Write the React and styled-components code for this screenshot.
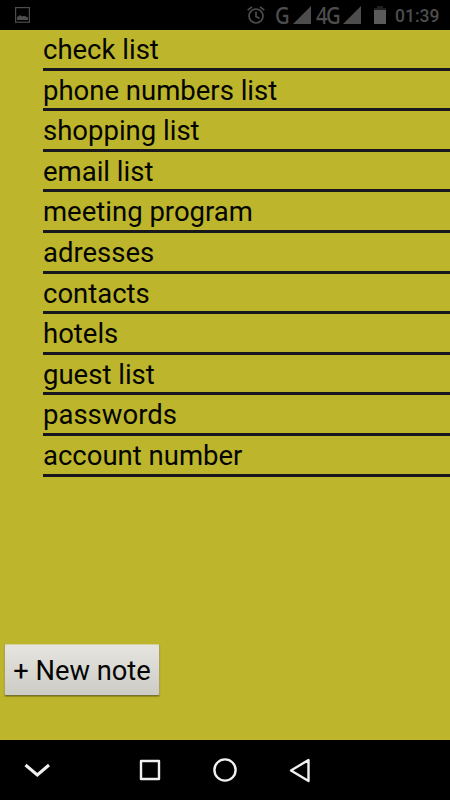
import React from "react";
import styled, { createGlobalStyle } from "styled-components";

const GlobalStyle = createGlobalStyle`
  * { box-sizing: border-box; }
  body { margin: 0; background: #000; font-family: Roboto, sans-serif; }
`;

const Screen = styled.div`
  width: 450px;
  height: 800px;
  display: flex;
  flex-direction: column;
  overflow: hidden;
  background: #000;
`;

const StatusBar = styled.header`
  flex: 0 0 30px;
  height: 30px;
  display: flex;
  align-items: center;
  padding: 0 10px 0 15px;
  color: #4d4d4d;
`;

const StatusIcon = styled.svg`
  display: block;
  flex: none;
  margin-left: ${(p) => p.$gap || 0}px;
`;

const Network = styled.span`
  flex: none;
  width: ${(p) => p.$width}px;
  margin-left: ${(p) => p.$gap}px;
  font-family: "Noto Sans", sans-serif;
  font-size: 23px;
  font-weight: 500;
  line-height: 28px;
  padding-bottom: 1px;
  letter-spacing: ${(p) => p.$tracking || 0}px;
  white-space: nowrap;
  transform: scaleX(0.88);
  transform-origin: left;
`;

const Clock = styled.time`
  flex: none;
  width: 45px;
  margin-left: 9px;
  padding-top: 2px;
  font-size: 17.5px;
  font-weight: 500;
  line-height: 29px;
`;

const Spacer = styled.div`
  flex: 1;
`;

const Content = styled.main`
  flex: 0 0 710px;
  display: flex;
  flex-direction: column;
  justify-content: space-between;
  background: #bdb52b;
`;

const NoteList = styled.ul`
  list-style: none;
  margin: 0;
  padding: 0 0 0 43px;
`;

const NoteRow = styled.li`
  height: 40.62px;
  border-bottom: 3px solid #17171d;
  font-size: 27.5px;
  line-height: 40px;
  color: #050500;
  white-space: nowrap;
`;

const NewNote = styled.button`
  width: 156px;
  height: 52px;
  margin: 0 0 44px 4px;
  padding: 1px 0 0;
  border: 1px solid #aaa451;
  border-top-color: #d2cf9c;
  border-bottom-color: #777433;
  border-radius: 2px;
  background: linear-gradient(#e5e4df, #cccbc5);
  box-shadow: 0 1px 1px rgba(70, 65, 0, 0.35);
  font: 27.3px/48px Roboto, sans-serif;
  color: #050505;
  white-space: nowrap;
`;

const NavBar = styled.nav`
  flex: 0 0 60px;
  display: grid;
  grid-template-columns: 112px 76px 74px 76px;
  align-items: center;
`;

const NavIcon = styled.svg`
  display: block;
  width: 28px;
  height: 28px;
  margin-left: ${(p) => p.$inset}px;
  fill: none;
  stroke: #f0f0f0;
  stroke-width: 2.4;
  stroke-linejoin: round;
`;

const notes = [
  "check list",
  "phone numbers list",
  "shopping list",
  "email list",
  "meeting program",
  "adresses",
  "contacts",
  "hotels",
  "guest list",
  "passwords",
  "account number",
];

function Signal() {
  return (
    <StatusIcon $gap={2} width="18" height="18" viewBox="0 0 18 18">
      <path d="M18 0v18H0z" fill="currentColor" />
    </StatusIcon>
  );
}

export default function App() {
  return (
    <Screen>
      <GlobalStyle />
      <StatusBar>
        <StatusIcon width="15" height="16" viewBox="0 0 15 16">
          <rect x=".6" y=".6" width="13.8" height="14.6" fill="none" stroke="currentColor" strokeWidth="1.2" />
          <path d="M2 13V10l2-1 1-1 2 1.5 2-.8 2 .8 2 1V13z" fill="currentColor" />
        </StatusIcon>
        <Spacer />
        <StatusIcon width="18" height="18" viewBox="0 0 18 18" fill="none" stroke="currentColor" strokeWidth="1.7">
          <circle cx="9" cy="10" r="7" />
          <path d="M.7 4.2 5 .8M17.3 4.2 13 .8M9 5.5v5l3.5 2" />
        </StatusIcon>
        <Network $width={16} $gap={10}>G</Network>
        <Signal />
        <Network $width={25} $gap={5} $tracking={-1.7}>4G</Network>
        <Signal />
        <StatusIcon $gap={13} width="12" height="18" viewBox="0 0 12 18">
          <path d="M3 0h6v2h3v2H0V2h3z" fill="#202020" />
          <path d="M0 4h12v14H0z" fill="#5b5b5b" />
        </StatusIcon>
        <Clock>01:39</Clock>
      </StatusBar>
      <Content>
        <NoteList>
          {notes.map((note) => (
            <NoteRow key={note}>{note}</NoteRow>
          ))}
        </NoteList>
        <NewNote>+ New note</NewNote>
      </Content>
      <NavBar>
        <NavIcon $inset={23} viewBox="0 0 28 28">
          <path d="m2.5 9 11.8 10L26 9" strokeWidth="3" strokeLinejoin="miter" />
        </NavIcon>
        <NavIcon $inset={24} viewBox="0 0 28 28">
          <rect x="5" y="5" width="18" height="18" />
        </NavIcon>
        <NavIcon $inset={23} viewBox="0 0 28 28">
          <circle cx="14" cy="14" r="10.6" />
        </NavIcon>
        <NavIcon $inset={24} viewBox="0 0 28 28">
          <path d="M22.5 4v21L5 14.5z" />
        </NavIcon>
      </NavBar>
    </Screen>
  );
}
